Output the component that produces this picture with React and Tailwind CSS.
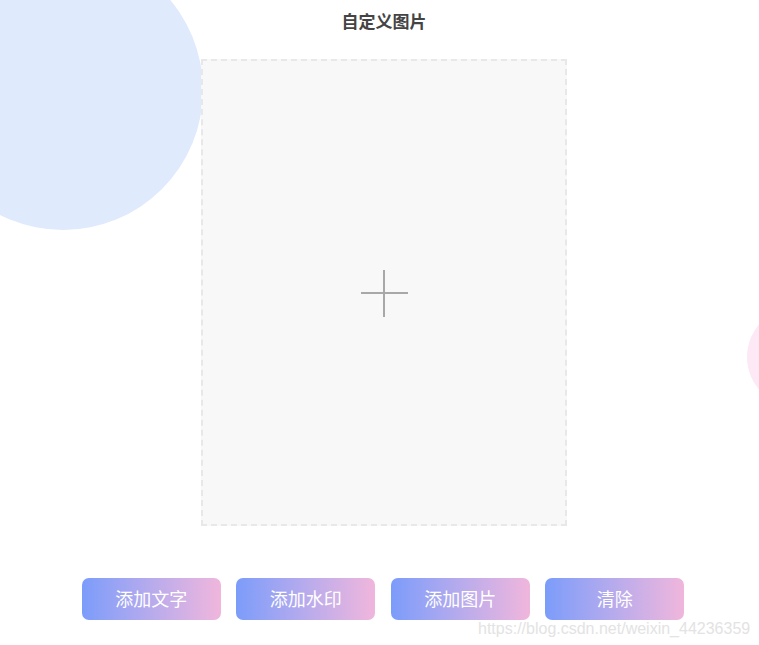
import { useState } from 'react'

const BUTTONS = ['添加文字', '添加水印', '添加图片', '清除']

function GradientButton({ label }) {
  return (
    <button className="w-[139px] h-[42px] rounded-[7px] bg-gradient-to-r from-[#7b9cfa] to-[#f0b6dc] text-white text-[18px] flex items-center justify-center">
      {label}
    </button>
  )
}

export default function App() {
  const [image] = useState(null)

  return (
    <div
      className="relative w-[759px] h-[645px] overflow-hidden bg-white"
      style={{ fontFamily: '"Noto Sans", "Noto Sans CJK SC", sans-serif' }}
    >
      {/* decorative blobs */}
      <div className="absolute left-[-77px] top-[-50px] w-[280px] h-[280px] rounded-full bg-[#dfeafc]" />
      <div className="absolute left-[747px] top-[307px] w-[100px] h-[100px] rounded-full bg-[#fde9f5]" />

      <div className="relative ml-[9px] w-[750px] flex flex-col items-center">
        <h1 className="mt-[10px] h-[24px] leading-[24px] text-[17px] font-bold text-[#444]">自定义图片</h1>

        {/* upload area */}
        <div className="mt-[25px] w-[366px] h-[467px] border-2 border-dashed border-[#e8e8e8] bg-[#f8f8f8] flex items-center justify-center">
          {image ? null : (
            <svg width="48" height="48" viewBox="0 0 48 48" className="mt-[1px]">
              <path d="M24 1v47M1 24h47" stroke="#a8a8a8" strokeWidth="2" />
            </svg>
          )}
        </div>

        <div className="mt-[52px] -ml-[2px] flex gap-[15.5px]">
          {BUTTONS.map(b => <GradientButton key={b} label={b} />)}
        </div>
      </div>

      <p
        className="absolute left-[478px] top-[617px] text-[16px] text-[#e3e3e3] whitespace-nowrap"
        style={{ fontFamily: '"Liberation Sans", Arial, sans-serif' }}
      >
        https://blog.csdn.net/weixin_44236359
      </p>
    </div>
  )
}
